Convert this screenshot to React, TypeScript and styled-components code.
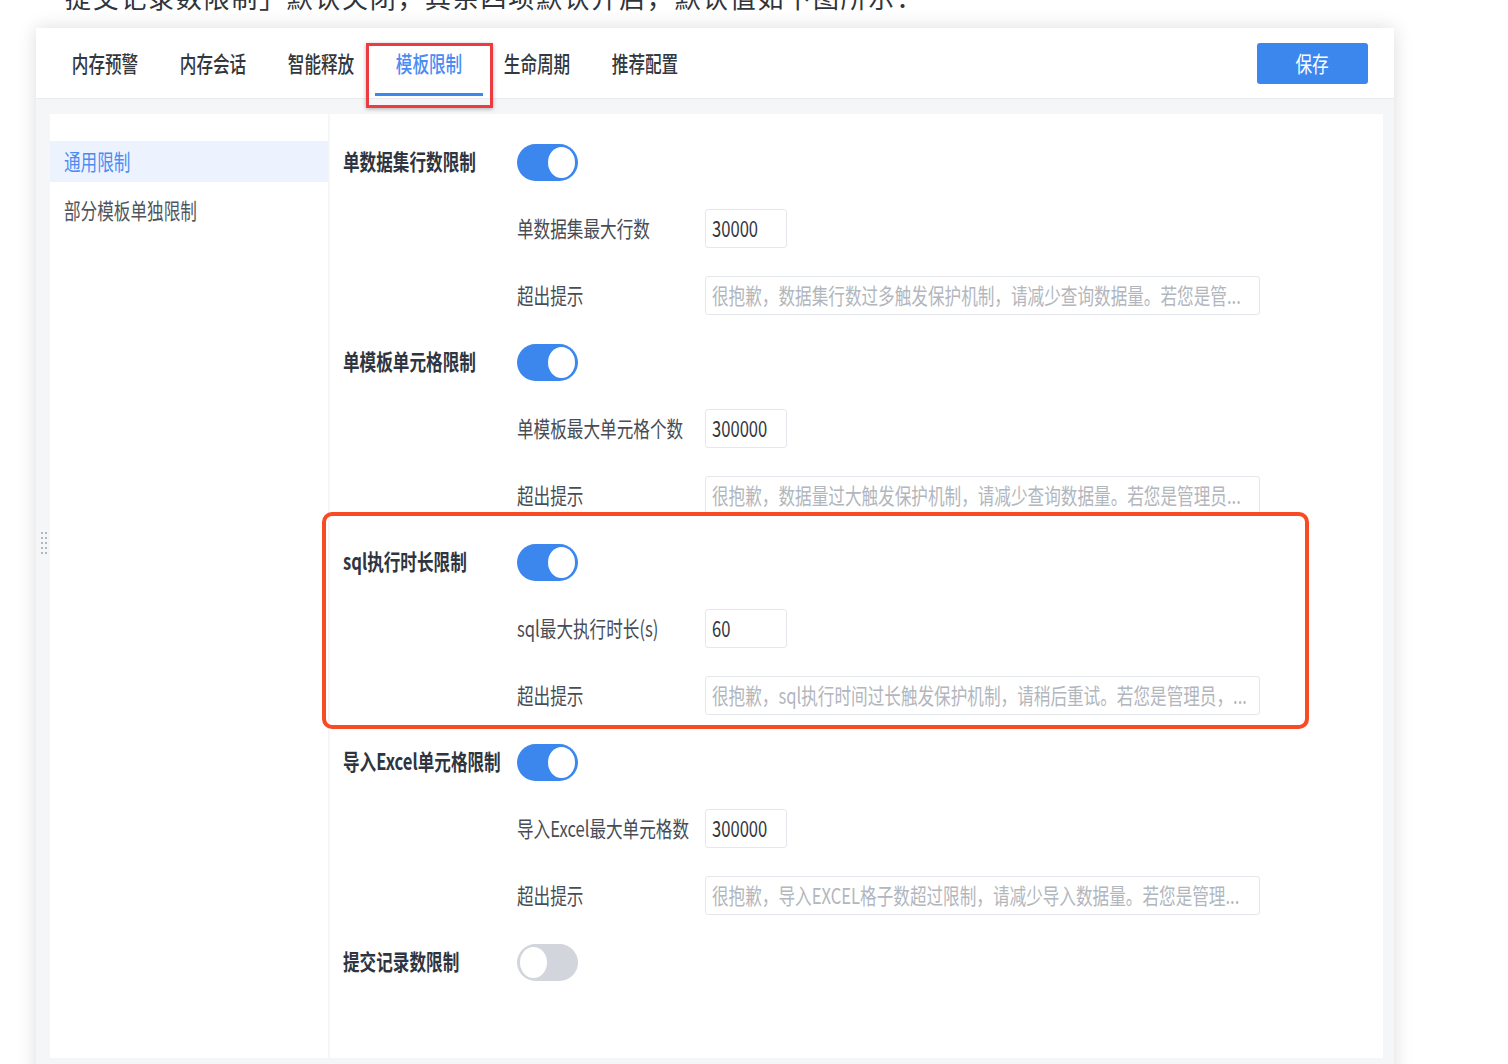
import React from "react";
import styled, { createGlobalStyle, css } from "styled-components";

const GlobalStyle = createGlobalStyle`
  html, body { margin: 0; padding: 0; background: #fff; }
  body { font-family: "Noto Sans CJK SC", "Noto Sans", sans-serif; overflow: hidden; }
  * { box-sizing: border-box; }
`;

const Page = styled.div`
  width: 1508px;
  height: 1064px;
  overflow: hidden;
`;

const DocText = styled.p`
  margin: -21px 0 0 65px;
  height: 36px;
  font-size: 26px;
  line-height: 36px;
  letter-spacing: 1.7px;
  color: #30343b;
  white-space: nowrap;
`;

const Card = styled.div`
  position: relative;
  margin: 13px 0 0 36px;
  width: 1358px;
  background: #f5f6f8;
  box-shadow: 0 0 18px rgba(0, 0, 0, 0.14);
  padding-bottom: 20px;
`;

const Header = styled.div`
  height: 71px;
  background: #fff;
  border-bottom: 1px solid #e9ebef;
  display: flex;
  align-items: stretch;
  padding: 0 26px 0 15px;
`;

const Tabs = styled.div`
  display: flex;
  flex: 1;
`;

const Narrow = styled.span<{ $origin?: string }>`
  display: inline-block;
  flex-shrink: 0;
  white-space: nowrap;
  transform: translateY(-2px) scaleX(0.755);
  transform-origin: ${(p) => p.$origin ?? "left"} center;
`;

const TabItem = styled.div<{ $active?: boolean }>`
  position: relative;
  width: 108px;
  display: flex;
  align-items: center;
  justify-content: center;
  padding-top: 1px;
  font-size: 22px;
  font-weight: 500;
  color: ${(p) => (p.$active ? "#4a8cf3" : "#33373e")};
  ${(p) =>
    p.$active &&
    css`
      &::after {
        content: "";
        position: absolute;
        left: 0;
        right: 0;
        bottom: 2px;
        height: 3px;
        background: #3b87ee;
      }
    `}
`;

const TabMark = styled.div`
  position: absolute;
  left: -9px;
  top: 15px;
  width: 127px;
  height: 65px;
  border: 3px solid #ec3b41;
  box-shadow: 0 1px 4px rgba(0, 0, 0, 0.3);
  z-index: 2;
`;

const SaveButton = styled.button`
  align-self: center;
  width: 111px;
  height: 41px;
  margin-top: 1px;
  padding: 0;
  border: 0;
  border-radius: 3px;
  background: #3b87ee;
  color: #fff;
  font-family: inherit;
  font-size: 22px;
  display: flex;
  align-items: center;
  justify-content: center;
`;

const Body = styled.div`
  position: relative;
  display: flex;
  gap: 2px;
  padding: 15px 11px 6px 14px;
`;

const DragHandle = styled.div`
  position: absolute;
  left: 5px;
  top: 433px;
  display: grid;
  grid-template-columns: repeat(2, 2px);
  grid-auto-rows: 2px;
  column-gap: 2px;
  row-gap: 3px;
  span {
    background: #9ba2ac;
    border-radius: 1px;
  }
`;

const Sidebar = styled.div`
  width: 278px;
  height: 944px;
  background: #fff;
  padding-top: 27px;
  display: flex;
  flex-direction: column;
  gap: 8px;
`;

const MenuItem = styled.div<{ $active?: boolean }>`
  height: 41px;
  display: flex;
  align-items: center;
  padding-left: 14px;
  font-size: 22px;
  color: ${(p) => (p.$active ? "#4a8cf3" : "#50555d")};
  background: ${(p) => (p.$active ? "#edf3fe" : "transparent")};
`;

const Main = styled.div`
  flex: 1;
  height: 944px;
  background: #fff;
  padding: 15px 0 0 13px;
`;

const Section = styled.div<{ $rows: number }>`
  position: relative;
  display: grid;
  grid-template-rows: repeat(${(p) => p.$rows}, 66.667px);
`;

const Row = styled.div<{ $sub?: boolean }>`
  display: flex;
  align-items: center;
  padding-left: ${(p) => (p.$sub ? "174px" : "0")};
`;

const SectionLabel = styled.div`
  width: 174px;
  font-size: 22px;
  font-weight: 700;
  color: #2f3540;
`;

const SubLabel = styled.div`
  width: 188px;
  font-size: 22px;
  color: #474c55;
`;

const InputBox = styled.div<{ $wide?: boolean; $placeholder?: boolean }>`
  width: ${(p) => (p.$wide ? "555px" : "82px")};
  height: 39px;
  border: 1px solid #e4e7ec;
  border-radius: 3px;
  display: flex;
  align-items: center;
  padding-left: 6px;
  overflow: hidden;
  font-size: 22px;
  color: ${(p) => (p.$placeholder ? "#b2b6bd" : "#33373e")};
`;

const Toggle = styled.div<{ $on: boolean }>`
  position: relative;
  width: 61px;
  height: 37px;
  border-radius: 19px;
  background: ${(p) => (p.$on ? "#3b87ee" : "#d2d5db")};
  &::after {
    content: "";
    position: absolute;
    top: 3px;
    ${(p) => (p.$on ? "right: 3px;" : "left: 3px;")}
    width: 27px;
    height: 31px;
    border-radius: 50%;
    background: #fff;
  }
`;

const Highlight = styled.div`
  position: absolute;
  left: -21px;
  top: -17px;
  width: 987px;
  height: 217px;
  border: 4px solid #f84a24;
  border-radius: 10px;
  pointer-events: none;
`;

type Limit = {
  title: string;
  on: boolean;
  field?: string;
  value?: string;
  tip?: string;
  marked?: boolean;
};

const limits: Limit[] = [
  {
    title: "单数据集行数限制",
    on: true,
    field: "单数据集最大行数",
    value: "30000",
    tip: "很抱歉，数据集行数过多触发保护机制，请减少查询数据量。若您是管...",
  },
  {
    title: "单模板单元格限制",
    on: true,
    field: "单模板最大单元格个数",
    value: "300000",
    tip: "很抱歉，数据量过大触发保护机制，请减少查询数据量。若您是管理员...",
  },
  {
    title: "sql执行时长限制",
    on: true,
    field: "sql最大执行时长(s)",
    value: "60",
    tip: "很抱歉，sql执行时间过长触发保护机制，请稍后重试。若您是管理员，...",
    marked: true,
  },
  {
    title: "导入Excel单元格限制",
    on: true,
    field: "导入Excel最大单元格数",
    value: "300000",
    tip: "很抱歉，导入EXCEL格子数超过限制，请减少导入数据量。若您是管理...",
  },
  { title: "提交记录数限制", on: false },
];

const tabs = ["内存预警", "内存会话", "智能释放", "模板限制", "生命周期", "推荐配置"];

export default function App() {
  return (
    <Page>
      <GlobalStyle />
      <DocText>提交记录数限制」默认关闭，其余四项默认开启，默认值如下图所示：</DocText>
      <Card>
        <Header>
          <Tabs>
            {tabs.map((t) => (
              <TabItem key={t} $active={t === "模板限制"}>
                <Narrow $origin="center">{t}</Narrow>
                {t === "模板限制" && <TabMark />}
              </TabItem>
            ))}
          </Tabs>
          <SaveButton>
            <Narrow $origin="center">保存</Narrow>
          </SaveButton>
        </Header>
        <Body>
          <DragHandle>
            {Array.from({ length: 10 }).map((_, i) => (
              <span key={i} />
            ))}
          </DragHandle>
          <Sidebar>
            <MenuItem $active>
              <Narrow>通用限制</Narrow>
            </MenuItem>
            <MenuItem>
              <Narrow>部分模板单独限制</Narrow>
            </MenuItem>
          </Sidebar>
          <Main>
            {limits.map((l) => (
              <Section key={l.title} $rows={l.field ? 3 : 1}>
                {l.marked && <Highlight />}
                <Row>
                  <SectionLabel>
                    <Narrow>{l.title}</Narrow>
                  </SectionLabel>
                  <Toggle $on={l.on} />
                </Row>
                {l.field && (
                  <>
                    <Row $sub>
                      <SubLabel>
                        <Narrow>{l.field}</Narrow>
                      </SubLabel>
                      <InputBox>
                        <Narrow>{l.value}</Narrow>
                      </InputBox>
                    </Row>
                    <Row $sub>
                      <SubLabel>
                        <Narrow>超出提示</Narrow>
                      </SubLabel>
                      <InputBox $wide $placeholder>
                        <Narrow>{l.tip}</Narrow>
                      </InputBox>
                    </Row>
                  </>
                )}
              </Section>
            ))}
          </Main>
        </Body>
      </Card>
    </Page>
  );
}
